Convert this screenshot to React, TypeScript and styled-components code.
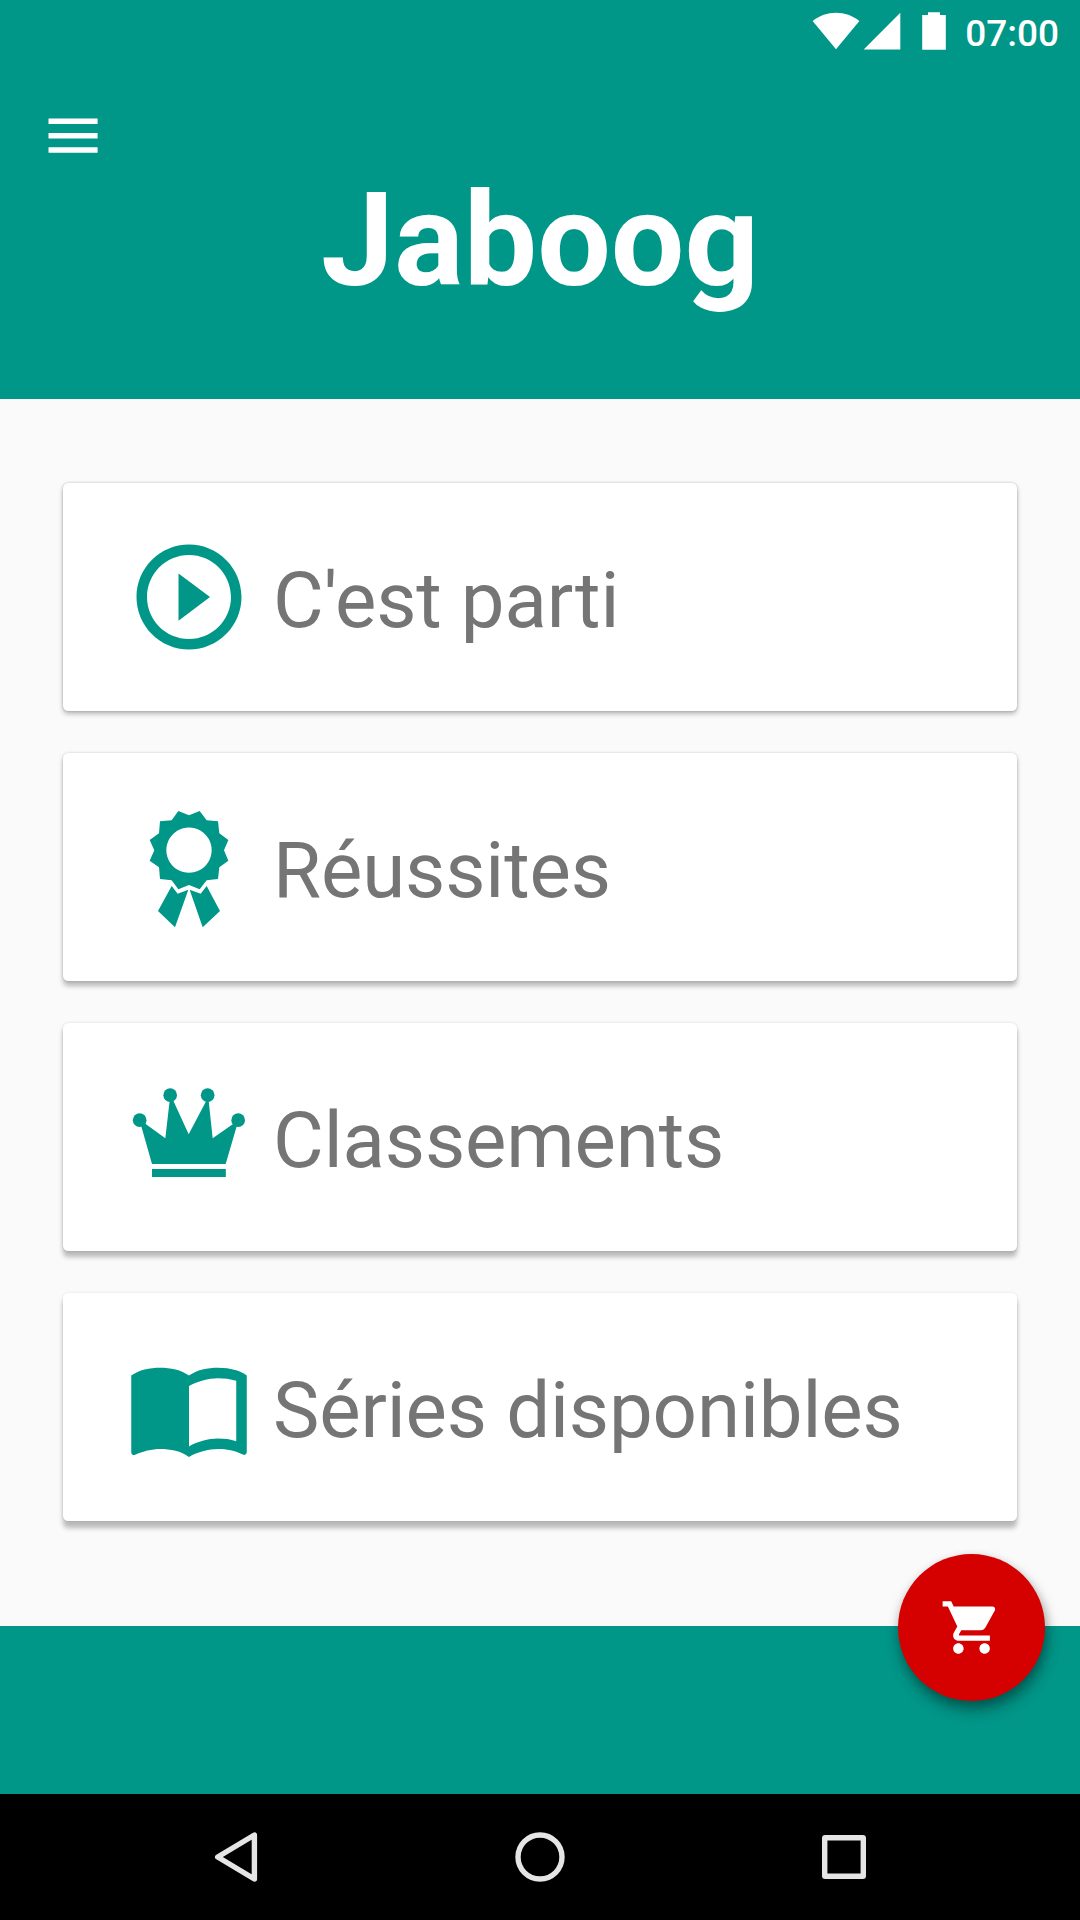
import React from "react";
import styled, { createGlobalStyle } from "styled-components";

const TEAL = "#009688";

const GlobalStyle = createGlobalStyle`
  html, body { margin: 0; padding: 0; }
  * { box-sizing: border-box; }
  svg { display: block; flex: none; }
`;

const Screen = styled.div`
  position: relative;
  width: 1080px;
  height: 1920px;
  display: flex;
  flex-direction: column;
  overflow: hidden;
  background: #fafafa;
  font-family: Roboto, "Liberation Sans", sans-serif;
`;

const Header = styled.header`
  height: 399px;
  flex: none;
  display: flex;
  flex-direction: column;
  background: ${TEAL};
  color: #fff;
`;

const StatusBar = styled.div`
  height: 63px;
  display: flex;
  justify-content: flex-end;
  align-items: center;
  padding-right: 21px;
`;

const StatusIcon = styled.svg<{ $gap: number }>`
  height: 63px;
  margin-right: ${(p) => p.$gap}px;
  fill: #fff;
`;

const Clock = styled.time`
  width: 95px;
  text-align: right;
  font-size: 37px;
  font-weight: 500;
  line-height: 43px;
  padding-top: 3px;
`;

const MenuButton = styled.button`
  width: 147px;
  height: 147px;
  margin-bottom: -63px;
  padding: 0;
  border: 0;
  background: none;
`;

const Title = styled.h1`
  margin: 17px 0 0;
  text-align: center;
  font-size: 130.5px;
  line-height: 154px;
  font-weight: 700;
`;

const Menu = styled.main`
  height: 1227px;
  flex: none;
  display: flex;
  flex-direction: column;
  gap: 42px;
  padding: 84px 63px 0;
`;

const Card = styled.a<{ $depth: number }>`
  height: 228px;
  flex: none;
  display: flex;
  align-items: center;
  gap: 21px;
  padding: 0 63px;
  border-radius: 5.25px;
  background: #fff;
  box-shadow:
    0 ${(p) => 3 + p.$depth * 1.2}px 5px rgba(0, 0, 0, 0.26),
    0 0 3px rgba(0, 0, 0, ${(p) => 0.2 - p.$depth * 0.03});
`;

const CardIcon = styled.svg`
  width: 126px;
  height: 126px;
  fill: ${TEAL};
`;

const CardLabel = styled.span`
  font-size: 78px;
  line-height: 92px;
  padding-top: 7px;
  letter-spacing: -0.13px;
  color: #757575;
  white-space: nowrap;
`;

const Footer = styled.footer`
  height: 168px;
  flex: none;
  background: ${TEAL};
`;

const CartButton = styled.button`
  position: absolute;
  right: 35px;
  top: 1554px;
  width: 147px;
  height: 147px;
  padding: 0;
  border: 0;
  border-radius: 50%;
  display: flex;
  align-items: center;
  justify-content: center;
  background: #d50000;
  box-shadow: 2px 9px 14px rgba(0, 0, 0, 0.36), 1px 2px 8px rgba(0, 0, 0, 0.12);
`;

const NavBar = styled.nav`
  height: 126px;
  flex: none;
  display: flex;
  justify-content: space-between;
  padding: 0 205px;
  background: #000;
`;

const NavIcon = styled.svg`
  width: 62px;
  height: 126px;
  fill: none;
  stroke: #e5e5e5;
  stroke-width: 5.4;
  stroke-linejoin: round;
`;

const PlayIcon = () => (
  <CardIcon viewBox="0 0 24 24">
    <path d="M10 16.5l6-4.5-6-4.5v9zM12 2C6.48 2 2 6.48 2 12s4.48 10 10 10 10-4.48 10-10S17.52 2 12 2zm0 18c-4.41 0-8-3.59-8-8s3.59-8 8-8 8 3.59 8 8-3.59 8-8 8z" />
  </CardIcon>
);

const AwardIcon = () => (
  <CardIcon viewBox="18 72 378 378">
    <path
      fillRule="evenodd"
      d="M175 93L207 106L239 93L260 121L294 124L298 160L325 180L312 211L325 242L298 262L294 297L260 301L239 328L207 315L175 328L155 301L120 297L117 262L89 242L103 211L89 180L117 160L120 124L155 121ZM207 142.500a68 68 0 1 0 0.010 0Z"
    />
    <path d="M155 318L173 341L205 329L165 442L114 393ZM260 318L242 341L209 329L248 442L300 393Z" />
  </CardIcon>
);

const CrownIcon = () => (
  <CardIcon viewBox="18 42 378 378">
    <circle cx="150.500" cy="105.500" r="20.500" />
    <circle cx="263" cy="105.500" r="20.500" />
    <circle cx="59" cy="180.500" r="20.500" />
    <circle cx="354.500" cy="180.500" r="20.500" />
    <path d="M63 196L96 312H317L351 196L338 193L278 235L266 122H259L206 223L160 122H149L136 235L76 191Z" />
    <path d="M96 327H317.500V351H96Z" />
  </CardIcon>
);

const BookIcon = () => (
  <CardIcon viewBox="0 0 24 24">
    <path d="M21 5c-1.110-.350-2.330-.500-3.500-.500-1.950 0-4.050.400-5.500 1.500-1.450-1.100-3.550-1.500-5.500-1.500S2.450 4.900 1 6v14.650c0 .250.250.500.500.500.100 0 .150-.050.250-.050C3.100 20.450 5.050 20 6.500 20c1.950 0 4.050.400 5.500 1.500 1.350-.850 3.800-1.500 5.500-1.500 1.650 0 3.350.300 4.750 1.050.100.050.150.050.250.050.250 0 .500-.250.500-.500V6c-.600-.450-1.250-.750-2-1zm0 13.500c-1.100-.350-2.300-.500-3.500-.500-1.700 0-4.150.650-5.500 1.500V8c1.350-.850 3.800-1.500 5.500-1.500 1.200 0 2.400.150 3.500.500v11.500z" />
  </CardIcon>
);

const items = [
  { label: "C'est parti", Icon: PlayIcon },
  { label: "Réussites", Icon: AwardIcon },
  { label: "Classements", Icon: CrownIcon },
  { label: "Séries disponibles", Icon: BookIcon },
];

export default function App() {
  return (
    <Screen>
      <GlobalStyle />
      <Header>
        <StatusBar>
          <StatusIcon $gap={3} width="48" viewBox="0 0 48 63">
            <path d="M24 49.300L.600 21C7.500 15.500 15.500 12.700 24 12.700S40.500 15.500 47.400 21Z" />
          </StatusIcon>
          <StatusIcon $gap={21} width="38" viewBox="0 0 38 63">
            <path d="M.700 49.500L37.300 12.700V49.500Z" />
          </StatusIcon>
          <StatusIcon $gap={18} width="24" viewBox="0 0 24 63">
            <path d="M0.200 15H6V12.200H18V15H23.800V49.700H.200Z" />
          </StatusIcon>
          <Clock>07:00</Clock>
        </StatusBar>
        <MenuButton aria-label="Menu">
          <svg width="147" height="147" viewBox="0 0 147 147" fill="#fff">
            <path d="M48.500 55.500H97.600V61.100H48.500ZM48.500 70H97.600V75.600H48.500ZM48.500 84.200H97.600V89.800H48.500Z" />
          </svg>
        </MenuButton>
        <Title>Jaboog</Title>
      </Header>
      <Menu>
        {items.map(({ label, Icon }, i) => (
          <Card key={label} $depth={i}>
            <Icon />
            <CardLabel>{label}</CardLabel>
          </Card>
        ))}
      </Menu>
      <Footer />
      <NavBar>
        <NavIcon viewBox="0 0 62 126">
          <path d="M12.700 63L49.400 41V85Z" />
        </NavIcon>
        <NavIcon viewBox="0 0 62 126">
          <circle cx="31" cy="63" r="22" />
        </NavIcon>
        <NavIcon viewBox="0 0 62 126">
          <rect x="11.700" y="43.700" width="38.600" height="38.600" rx="0.500" />
        </NavIcon>
      </NavBar>
      <CartButton aria-label="Boutique">
        <svg width="63" height="63" viewBox="0 0 24 24" fill="#fff">
          <path d="M7 18c-1.100 0-1.990.900-1.990 2S5.900 22 7 22s2-.900 2-2-.900-2-2-2zM1 2v2h2l3.600 7.590-1.350 2.450c-.160.280-.250.610-.250.960 0 1.100.900 2 2 2h12v-2H7.420c-.140 0-.250-.110-.250-.250l.030-.120.900-1.630h7.450c.750 0 1.410-.410 1.750-1.030l3.580-6.490c.080-.140.120-.310.120-.480 0-.550-.450-1-1-1H5.210l-.940-2H1zm16 16c-1.100 0-1.990.900-1.990 2s.890 2 1.990 2 2-.900 2-2-.900-2-2-2z" />
        </svg>
      </CartButton>
    </Screen>
  );
}
